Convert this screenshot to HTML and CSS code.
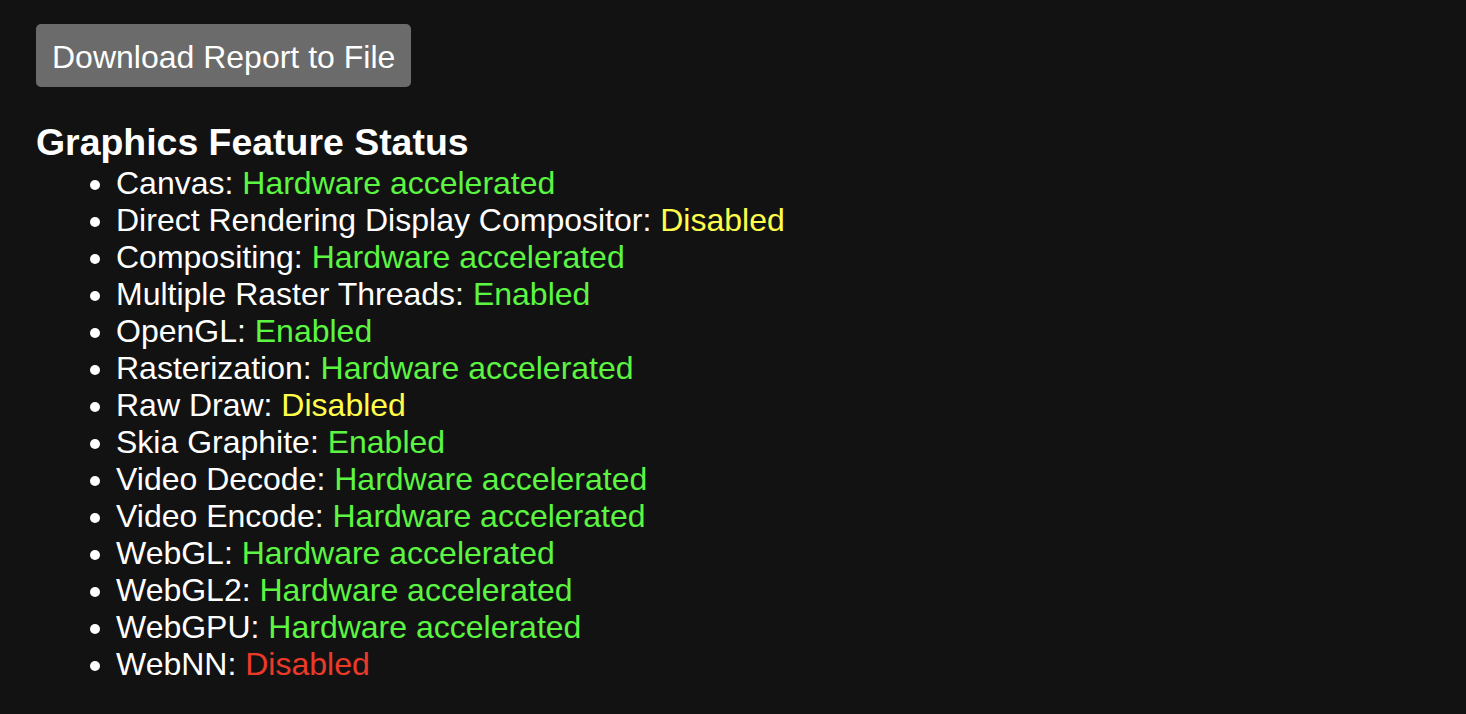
FILE: index.html
```html
<!DOCTYPE html>
<html lang="en">
<head>
  <meta charset="UTF-8" />
  <title>GPU Internals</title>
  <link rel="stylesheet" href="styles.css">
</head>
<body>
  <button class="download-btn">Download Report to File</button>

  <h3 class="section-title">Graphics Feature Status</h3>
  <ul class="feature-list">
    <li>Canvas: <span class="on">Hardware accelerated</span></li>
    <li>Direct Rendering Display Compositor: <span class="off">Disabled</span></li>
    <li>Compositing: <span class="on">Hardware accelerated</span></li>
    <li>Multiple Raster Threads: <span class="on">Enabled</span></li>
    <li>OpenGL: <span class="on">Enabled</span></li>
    <li>Rasterization: <span class="on">Hardware accelerated</span></li>
    <li>Raw Draw: <span class="off">Disabled</span></li>
    <li>Skia Graphite: <span class="on">Enabled</span></li>
    <li>Video Decode: <span class="on">Hardware accelerated</span></li>
    <li>Video Encode: <span class="on">Hardware accelerated</span></li>
    <li>WebGL: <span class="on">Hardware accelerated</span></li>
    <li>WebGL2: <span class="on">Hardware accelerated</span></li>
    <li>WebGPU: <span class="on">Hardware accelerated</span></li>
    <li>WebNN: <span class="broken">Disabled</span></li>
  </ul>
</body>
</html>
```

FILE: styles.css
```css
/* gpu status page, dark theme */
body {
  margin: 0;
  padding: 24px 36px;
  background: #121212;
  color: #fff;
  font-family: "Liberation Sans", Arial, sans-serif;
  font-size: 32px;
  line-height: 37px;
}

.download-btn {
  display: block;
  font-family: inherit;
  font-size: 32px;
  line-height: 37px;
  color: #fff;
  background-color: #6b6b6b;
  border: none;
  border-radius: 5px;
  padding: 15px 16px 11px;
  cursor: pointer;
}

.section-title {
  margin: 34px 0 0;
  font-size: 37.44px;
  line-height: 43px;
  font-weight: bold;
}

.feature-list {
  margin: 1px 0 0;
  padding-left: 80px;
}

.on {
  color: #5cf542;
}

.off {
  color: #ffff4a;
}

.broken {
  color: #ec3a2a;
}
```
